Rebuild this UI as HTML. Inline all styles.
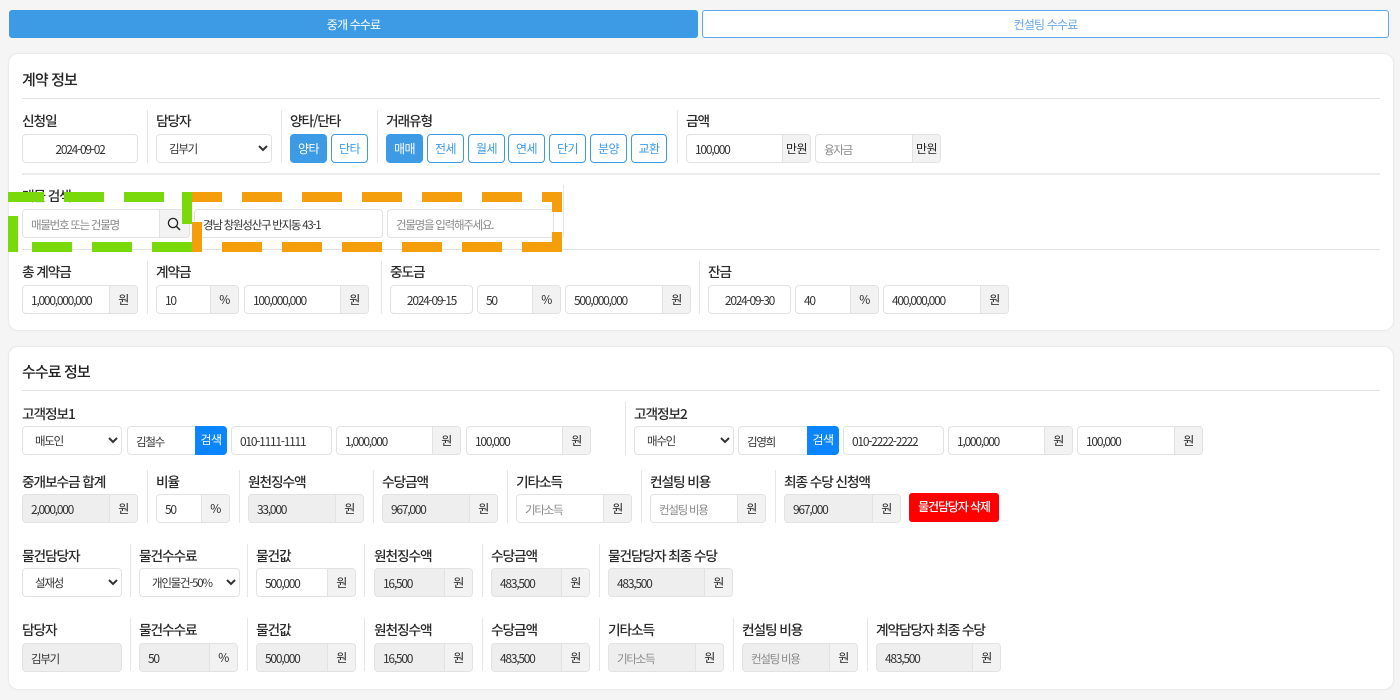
<!DOCTYPE html>
<html lang="ko"><head><meta charset="utf-8"><title>수수료</title>
<style>
*{box-sizing:border-box}
html,body{margin:0;padding:0}
body{position:relative;width:1400px;height:700px;overflow:hidden;background:#f5f5f5;font-family:"Noto Sans CJK KR","Liberation Sans",sans-serif;color:#333}
.tab{position:absolute;top:10px;height:28px;border-radius:3px;font-size:12px;line-height:27px;text-align:center;letter-spacing:-.85px;border:1px solid #3d9be6}
.card{position:absolute;left:9px;width:1384px;background:#fff;border-radius:9px;box-shadow:0 0 2px rgba(0,0,0,.14)}
.h{position:absolute;left:22px;font-size:15px;font-weight:500;line-height:22px;color:#222;letter-spacing:-.9px;white-space:nowrap;margin-top:1px}
.hr{position:absolute;left:22px;width:1358px;height:1px;background:#e3e3e3}
.l{position:absolute;font-size:13.7px;font-weight:500;line-height:20px;color:#2a2a2a;letter-spacing:-1.1px;white-space:nowrap}
.d{position:absolute;width:1px;background:#e6e6e6}
.g{position:absolute;height:29px;display:flex;border:1px solid #e2e2e2;border-radius:4px;background:#fff;overflow:hidden;font-size:12px;line-height:29px;letter-spacing:-1.25px;color:#333;white-space:nowrap}
.g span{flex:1;padding-left:8px;overflow:hidden}
.g b{flex:none;font-weight:400;text-align:center;background:#f2f2f2;border-left:1px solid #e2e2e2;color:#222;letter-spacing:-.5px;line-height:27px}
.w b{width:28px}
.x{background:#eee}
.c span{padding:0;text-align:center}
.p span,.g span.k{font-size:11.5px;letter-spacing:-1.25px;padding-top:1px}
.p span{color:#8a8a8a}
.g.v{overflow:visible}
.g b.s{background:#0a84ff;border:0;color:#fff;width:32px;height:29px;margin:-1px -1px -1px 0;border-radius:0 4px 4px 0;letter-spacing:-.6px;line-height:28px}
.sel{position:absolute;height:29px;border:1px solid #e2e2e2;border-radius:4px;background:#fff;font:11.5px "Noto Sans CJK KR","Liberation Sans",sans-serif;letter-spacing:-1.25px;color:#333;padding:1px 4px 0 8px;margin:0}
.btn{position:absolute;top:134px;width:37px;height:29px;border:1px solid #3d9be6;border-radius:4px;background:#fff;color:#3d9be6;font-size:12px;line-height:27px;text-align:center;letter-spacing:-.6px}
.on{background:#3d9be6;color:#fff}
.del{position:absolute;left:909px;top:493px;width:90px;height:29px;background:#f00;border-radius:3px;color:#fff;font-size:12px;font-weight:500;line-height:28px;text-align:center;letter-spacing:-1.1px;white-space:nowrap}
.o{position:absolute;height:10px;width:40px}
.gr{background:#7ad90b}.or{background:#f59e0b}
svg{display:block}
</style></head><body>

<div class="tab on" style="left:9px;width:689px">중개 수수료</div>
<div class="tab" style="left:702px;width:687px;background:#fff;color:#6aa6e6;border-color:#5aa8ea">컨설팅 수수료</div>

<div class="card" style="top:54px;height:276px"></div>
<div class="card" style="top:347px;height:342px"></div>

<div class="h" style="top:68px">계약 정보</div>
<div class="hr" style="top:98px"></div>

<div class="l" style="left:22px;top:110px">신청일</div>
<div class="g c" style="left:22px;top:134px;width:116px"><span>2024-09-02</span></div>
<div class="d" style="left:147px;top:110px;height:53px"></div>
<div class="l" style="left:156px;top:110px">담당자</div>
<select class="sel" style="left:156px;top:134px;width:116px"><option>김부기</option></select>
<div class="d" style="left:281px;top:110px;height:53px"></div>
<div class="l" style="left:290px;top:110px">양타/단타</div>
<div class="btn on" style="left:290px">양타</div>
<div class="btn" style="left:331px">단타</div>
<div class="d" style="left:377px;top:110px;height:53px"></div>
<div class="l" style="left:386px;top:110px">거래유형</div>
<div class="btn on" style="left:386px">매매</div>
<div class="btn" style="left:427px">전세</div>
<div class="btn" style="left:468px">월세</div>
<div class="btn" style="left:508px">연세</div>
<div class="btn" style="left:549px">단기</div>
<div class="btn" style="left:590px">분양</div>
<div class="btn" style="left:631px;width:36px">교환</div>
<div class="d" style="left:677px;top:110px;height:53px"></div>
<div class="l" style="left:686px;top:110px">금액</div>
<div class="g w" style="left:686px;top:134px;width:125px"><span>100,000</span><b>만원</b></div>
<div class="g w p" style="left:815px;top:134px;width:126px"><span>융자금</span><b>만원</b></div>
<div class="hr" style="top:173px;height:2px;background:#ececec"></div>

<div class="l" style="left:22px;top:185px">매물 검색</div>
<div class="g p" style="left:22px;top:209px;width:168px"><span>매물번호 또는 건물명</span><b style="width:30px"><svg width="28" height="27" viewBox="0 0 28 27"><circle cx="13" cy="13" r="4.6" fill="none" stroke="#222" stroke-width="1.3"/><path d="M16.4 16.4L20 20" stroke="#222" stroke-width="1.5" fill="none"/></svg></b></div>
<div class="g" style="left:194px;top:209px;width:189px"><span class="k">경남 창원성산구 반지동 43-1</span></div>
<div class="g p" style="left:387px;top:209px;width:167px"><span>건물명을 입력해주세요.</span></div>
<div class="d" style="left:563px;top:185px;height:53px"></div>
<div class="hr" style="top:249px"></div>

<div class="l" style="left:22px;top:261px">총 계약금</div>
<div class="g w" style="left:22px;top:285px;width:116px"><span>1,000,000,000</span><b>원</b></div>
<div class="d" style="left:147px;top:261px;height:53px"></div>
<div class="l" style="left:156px;top:261px">계약금</div>
<div class="g w" style="left:156px;top:285px;width:83px"><span>10</span><b>%</b></div>
<div class="g w" style="left:244px;top:285px;width:125px"><span>100,000,000</span><b>원</b></div>
<div class="d" style="left:381px;top:261px;height:53px"></div>
<div class="l" style="left:390px;top:261px">중도금</div>
<div class="g c" style="left:390px;top:285px;width:83px"><span>2024-09-15</span></div>
<div class="g w" style="left:477px;top:285px;width:84px"><span>50</span><b>%</b></div>
<div class="g w" style="left:565px;top:285px;width:126px"><span>500,000,000</span><b>원</b></div>
<div class="d" style="left:699px;top:261px;height:53px"></div>
<div class="l" style="left:708px;top:261px">잔금</div>
<div class="g c" style="left:708px;top:285px;width:83px"><span>2024-09-30</span></div>
<div class="g w" style="left:795px;top:285px;width:84px"><span>40</span><b>%</b></div>
<div class="g w" style="left:883px;top:285px;width:126px"><span>400,000,000</span><b>원</b></div>

<div class="h" style="top:360px">수수료 정보</div>
<div class="hr" style="top:390px"></div>

<div class="l" style="left:22px;top:403px">고객정보1</div>
<select class="sel" style="left:22px;top:426px;width:100px"><option>매도인</option></select>
<div class="g v" style="left:127px;top:426px;width:100px"><span class="k">김철수</span><b class="s">검색</b></div>
<div class="g" style="left:231px;top:426px;width:101px"><span>010-1111-1111</span></div>
<div class="g w" style="left:336px;top:426px;width:125px"><span>1,000,000</span><b>원</b></div>
<div class="g w" style="left:466px;top:426px;width:125px"><span>100,000</span><b>원</b></div>
<div class="d" style="left:625px;top:402px;height:53px"></div>
<div class="l" style="left:634px;top:403px">고객정보2</div>
<select class="sel" style="left:634px;top:426px;width:100px"><option>매수인</option></select>
<div class="g v" style="left:738px;top:426px;width:101px"><span class="k">김영희</span><b class="s">검색</b></div>
<div class="g" style="left:843px;top:426px;width:101px"><span>010-2222-2222</span></div>
<div class="g w" style="left:948px;top:426px;width:125px"><span>1,000,000</span><b>원</b></div>
<div class="g w" style="left:1077px;top:426px;width:126px"><span>100,000</span><b>원</b></div>

<div class="l" style="left:22px;top:471px">중개보수금 합계</div>
<div class="g w x" style="left:22px;top:494px;width:116px"><span>2,000,000</span><b>원</b></div>
<div class="d" style="left:147px;top:470px;height:53px"></div>
<div class="l" style="left:156px;top:471px">비율</div>
<div class="g w" style="left:156px;top:494px;width:74px"><span>50</span><b>%</b></div>
<div class="d" style="left:239px;top:470px;height:53px"></div>
<div class="l" style="left:248px;top:471px">원천징수액</div>
<div class="g w x" style="left:248px;top:494px;width:116px"><span>33,000</span><b>원</b></div>
<div class="d" style="left:373px;top:470px;height:53px"></div>
<div class="l" style="left:382px;top:471px">수당금액</div>
<div class="g w x" style="left:382px;top:494px;width:116px"><span>967,000</span><b>원</b></div>
<div class="d" style="left:507px;top:470px;height:53px"></div>
<div class="l" style="left:516px;top:471px">기타소득</div>
<div class="g w p" style="left:516px;top:494px;width:116px"><span>기타소득</span><b>원</b></div>
<div class="d" style="left:641px;top:470px;height:53px"></div>
<div class="l" style="left:650px;top:471px">컨설팅 비용</div>
<div class="g w p" style="left:650px;top:494px;width:116px"><span>컨설팅 비용</span><b>원</b></div>
<div class="d" style="left:775px;top:470px;height:53px"></div>
<div class="l" style="left:784px;top:471px">최종 수당 신청액</div>
<div class="g w x" style="left:784px;top:494px;width:117px"><span>967,000</span><b>원</b></div>
<div class="del">물건담당자 삭제</div>

<div class="l" style="left:22px;top:545px">물건담당자</div>
<select class="sel" style="left:22px;top:568px;width:100px"><option>설재성</option></select>
<div class="d" style="left:130px;top:544px;height:53px"></div>
<div class="l" style="left:139px;top:545px">물건수수료</div>
<select class="sel" style="left:139px;top:568px;width:101px"><option>개인물건-50%</option></select>
<div class="d" style="left:247px;top:544px;height:53px"></div>
<div class="l" style="left:256px;top:545px">물건값</div>
<div class="g w" style="left:256px;top:568px;width:100px"><span>500,000</span><b>원</b></div>
<div class="d" style="left:364px;top:544px;height:53px"></div>
<div class="l" style="left:374px;top:545px">원천징수액</div>
<div class="g w x" style="left:374px;top:568px;width:99px"><span>16,500</span><b>원</b></div>
<div class="d" style="left:482px;top:544px;height:53px"></div>
<div class="l" style="left:491px;top:545px">수당금액</div>
<div class="g w x" style="left:491px;top:568px;width:99px"><span>483,500</span><b>원</b></div>
<div class="d" style="left:599px;top:544px;height:53px"></div>
<div class="l" style="left:608px;top:545px">물건담당자 최종 수당</div>
<div class="g w x" style="left:608px;top:568px;width:125px"><span>483,500</span><b>원</b></div>

<div class="l" style="left:22px;top:619px">담당자</div>
<div class="g x" style="left:22px;top:643px;width:100px"><span class="k">김부기</span></div>
<div class="d" style="left:130px;top:618px;height:53px"></div>
<div class="l" style="left:139px;top:619px">물건수수료</div>
<div class="g w x" style="left:139px;top:643px;width:99px"><span>50</span><b>%</b></div>
<div class="d" style="left:247px;top:618px;height:53px"></div>
<div class="l" style="left:256px;top:619px">물건값</div>
<div class="g w x" style="left:256px;top:643px;width:100px"><span>500,000</span><b>원</b></div>
<div class="d" style="left:364px;top:618px;height:53px"></div>
<div class="l" style="left:374px;top:619px">원천징수액</div>
<div class="g w x" style="left:374px;top:643px;width:99px"><span>16,500</span><b>원</b></div>
<div class="d" style="left:482px;top:618px;height:53px"></div>
<div class="l" style="left:491px;top:619px">수당금액</div>
<div class="g w x" style="left:491px;top:643px;width:99px"><span>483,500</span><b>원</b></div>
<div class="d" style="left:599px;top:618px;height:53px"></div>
<div class="l" style="left:608px;top:619px">기타소득</div>
<div class="g w x p" style="left:608px;top:643px;width:116px"><span>기타소득</span><b>원</b></div>
<div class="d" style="left:733px;top:618px;height:53px"></div>
<div class="l" style="left:742px;top:619px">컨설팅 비용</div>
<div class="g w x p" style="left:742px;top:643px;width:116px"><span>컨설팅 비용</span><b>원</b></div>
<div class="d" style="left:867px;top:618px;height:53px"></div>
<div class="l" style="left:876px;top:619px">계약담당자 최종 수당</div>
<div class="g w x" style="left:876px;top:643px;width:125px"><span>483,500</span><b>원</b></div>

<!-- green dashes -->
<div class="o gr" style="left:8px;top:192px;width:36px"></div>
<div class="o gr" style="left:64px;top:192px"></div>
<div class="o gr" style="left:124px;top:192px"></div>
<div class="o gr" style="left:182px;top:192px;width:10px;height:32px"></div>
<div class="o gr" style="left:8px;top:216px;width:10px;height:36px"></div>
<div class="o gr" style="left:32px;top:242px"></div>
<div class="o gr" style="left:92px;top:242px"></div>
<div class="o gr" style="left:152px;top:242px"></div>
<!-- orange dashes -->
<div class="o or" style="left:192px;top:192px;width:30px"></div>
<div class="o or" style="left:242px;top:192px"></div>
<div class="o or" style="left:302px;top:192px"></div>
<div class="o or" style="left:362px;top:192px"></div>
<div class="o or" style="left:422px;top:192px"></div>
<div class="o or" style="left:482px;top:192px"></div>
<div class="o or" style="left:542px;top:192px;width:20px"></div>
<div class="o or" style="left:552px;top:192px;width:10px;height:20px"></div>
<div class="o or" style="left:552px;top:232px;width:10px;height:20px"></div>
<div class="o or" style="left:192px;top:222px;width:10px;height:30px"></div>
<div class="o or" style="left:222px;top:242px"></div>
<div class="o or" style="left:282px;top:242px"></div>
<div class="o or" style="left:342px;top:242px"></div>
<div class="o or" style="left:402px;top:242px"></div>
<div class="o or" style="left:462px;top:242px"></div>
<div class="o or" style="left:522px;top:242px"></div>

</body></html>
